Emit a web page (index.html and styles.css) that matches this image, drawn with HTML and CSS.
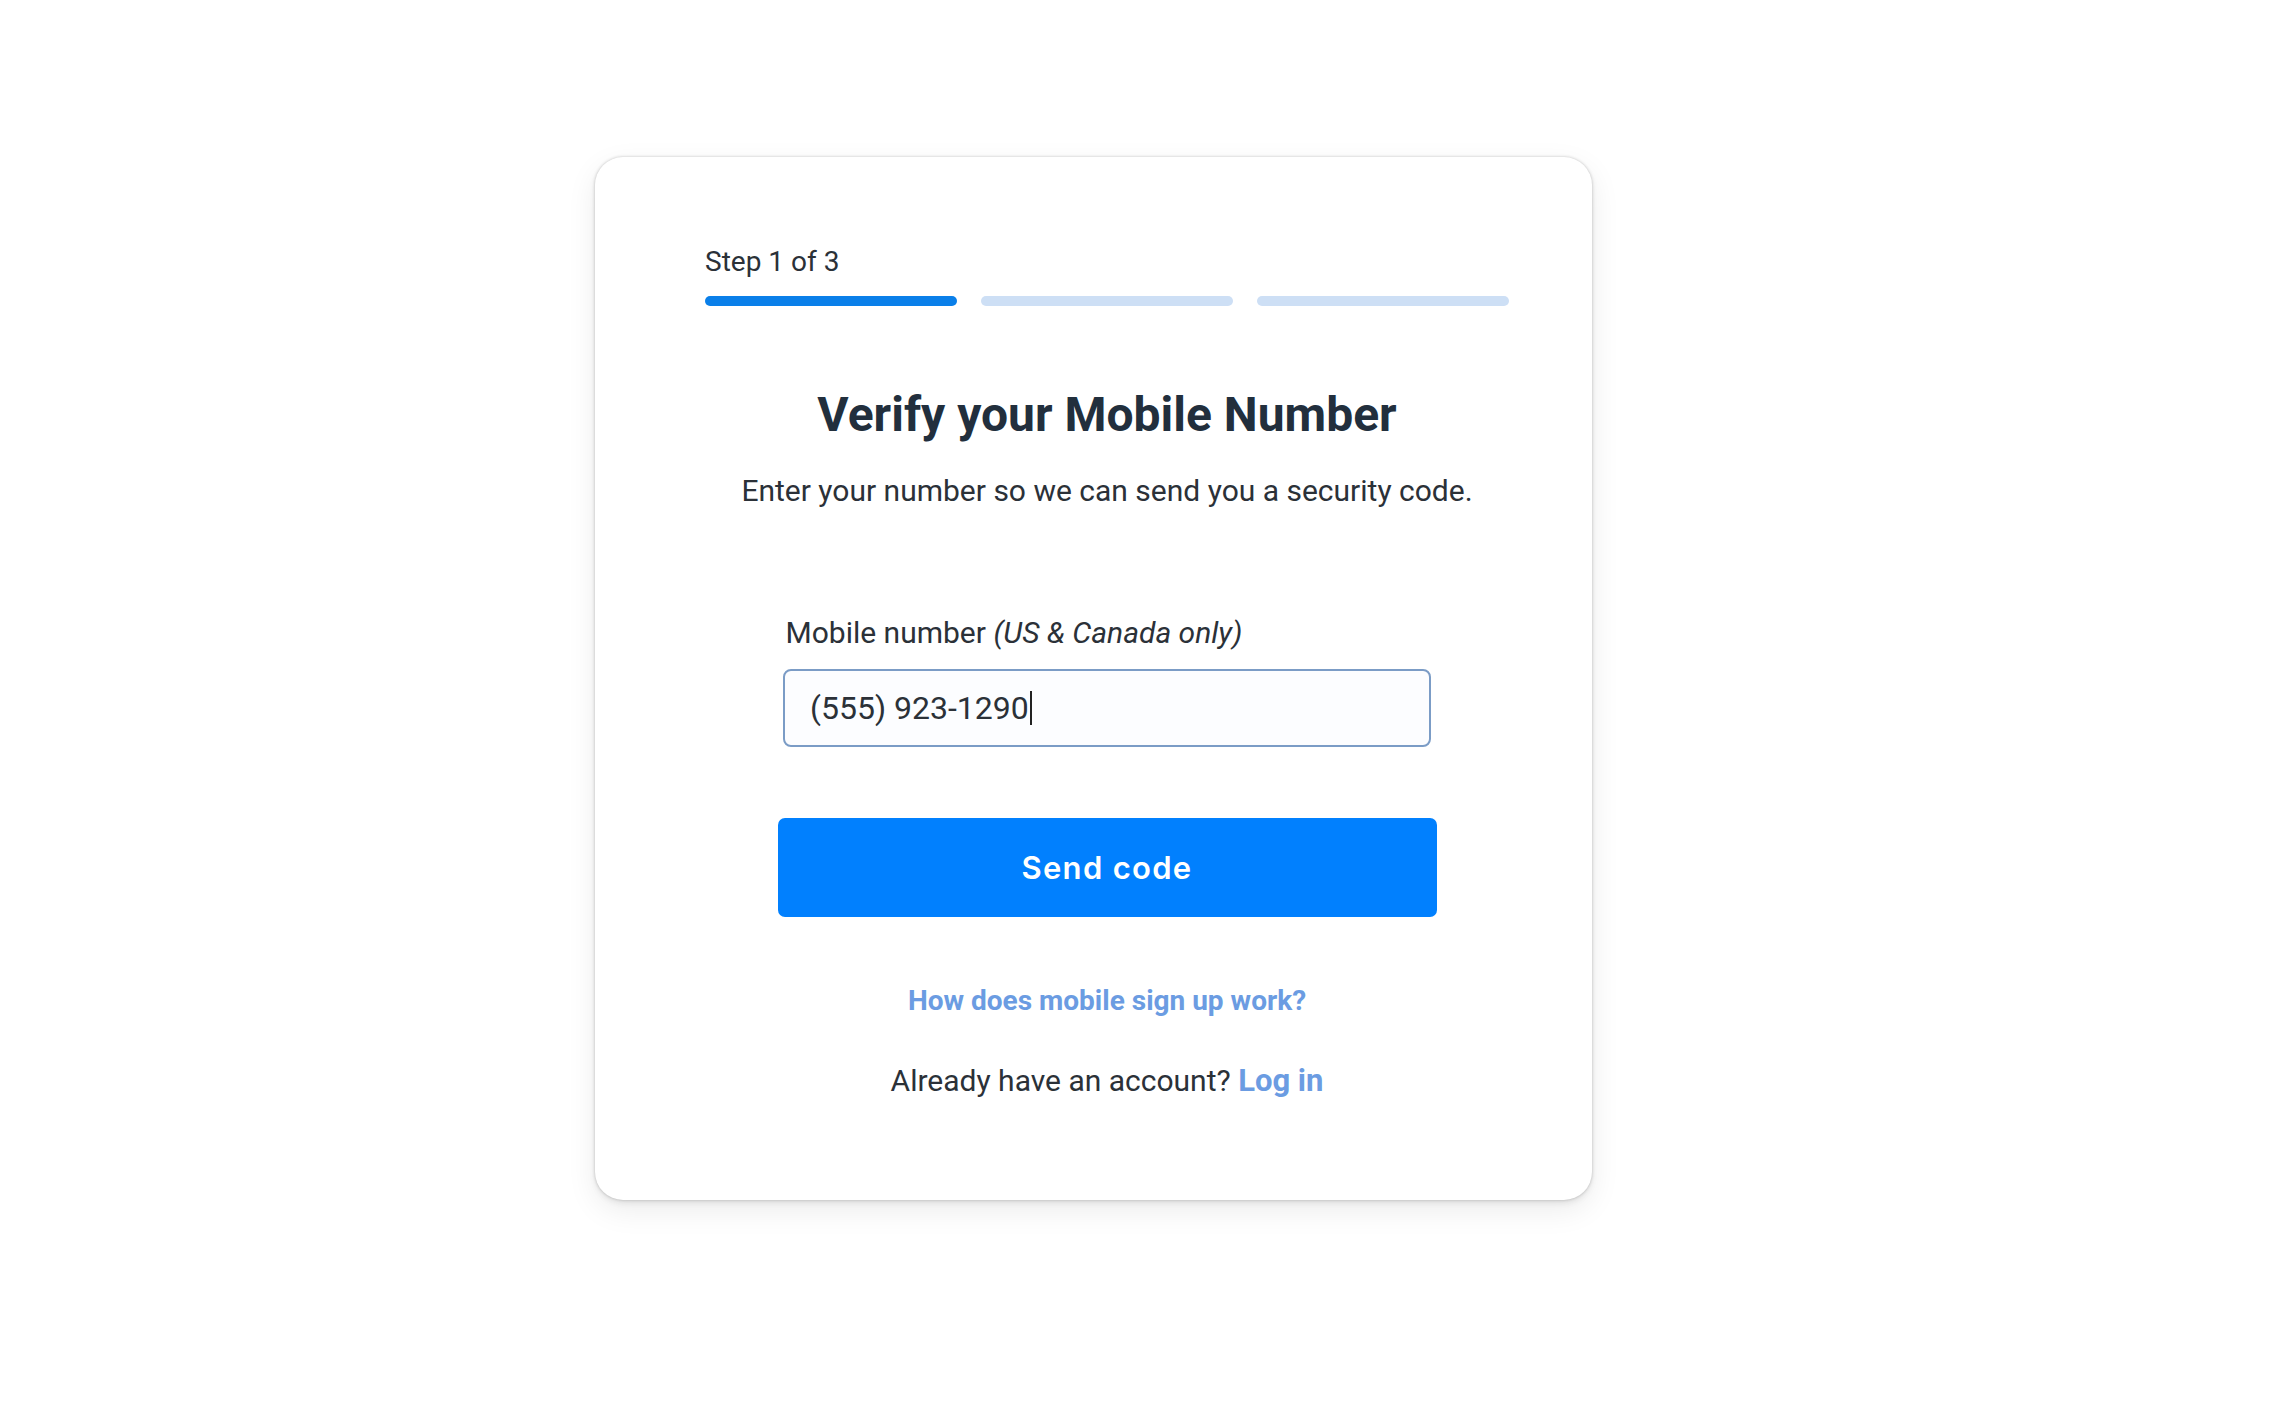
FILE: index.html
```html
<!DOCTYPE html>
<html lang="en">
<head>
<meta charset="utf-8">
<title>Verify your Mobile Number</title>
<link rel="stylesheet" href="styles.css">
</head>
<body>
<div class="page">
  <main class="card">
    <div class="stepper">
      <div class="step-label">Step 1 of 3</div>
      <div class="bars">
        <span class="bar active"></span>
        <span class="bar"></span>
        <span class="bar"></span>
      </div>
    </div>
    <h1 class="title">Verify your Mobile Number</h1>
    <p class="subtitle">Enter your number so we can send you a security code.</p>
    <form class="form">
      <label class="label">Mobile number <em>(US &amp; Canada only)</em></label>
      <div class="input"><span class="value">(555) 923-1290</span><span class="caret"></span></div>
      <button type="button" class="btn">Send code</button>
    </form>
    <a class="help" href="#">How does mobile sign up work?</a>
    <p class="login">Already have an account? <a href="#">Log in</a></p>
  </main>
</div>
</body>
</html>
```
FILE: styles.css
```css
* { box-sizing: border-box; }
html, body { margin: 0; background: #ffffff; }
body { font-family: Roboto, "Liberation Sans", sans-serif; color: #2b3138; }

.page {
  min-height: 1424px;
  padding: 157px 0 120px 595px;
}

.card {
  width: 997px;
  height: 1043px;
  background: #fff;
  border-radius: 28px;
  box-shadow: 0 0 3px rgba(0,0,0,0.22), 0 3px 6px rgba(0,0,0,0.08), 0 10px 30px rgba(0,0,0,0.08);
  padding: 90px 83px 0 110px;
  display: flex;
  flex-direction: column;
  align-items: center;
}

.stepper { width: 100%; }
.step-label {
  font-size: 28px;
  line-height: 30px;
  color: #2b3138;
}
.bars {
  display: flex;
  gap: 24px;
  margin-top: 19px;
}
.bar {
  flex: 1;
  height: 10px;
  border-radius: 5px;
  background: #cddff5;
}
.bar.active { background: #0a7fe9; }

.title {
  margin: 81px 0 0;
  font-size: 48px;
  line-height: 56px;
  font-weight: 700;
  color: #222f3d;
  text-align: center;
}
.subtitle {
  margin: 31px 0 0;
  font-size: 30px;
  line-height: 34px;
  color: #2b3138;
  text-align: center;
}

.form {
  margin-top: 108px;
  width: 659px;
  display: flex;
  flex-direction: column;
  align-items: center;
}
.label {
  align-self: stretch;
  padding-left: 8px;
  font-size: 30px;
  line-height: 34px;
  color: #2b3138;
}
.label em { font-style: italic; }

.input {
  margin-top: 19px;
  width: 648px;
  height: 78px;
  border: 2px solid #7b9cc6;
  border-radius: 8px;
  background: #fcfdff;
  display: flex;
  align-items: center;
  padding-left: 25px;
  font-size: 32px;
  color: #2b3138;
}
.caret {
  display: inline-block;
  width: 2px;
  height: 34px;
  background: #222;
  margin-left: 1px;
}

.btn {
  margin-top: 71px;
  width: 659px;
  height: 99px;
  border: 0;
  border-radius: 7px;
  background: #0180fe;
  color: #fff;
  font-family: Inter, "Open Sans", sans-serif;
  font-weight: 600;
  font-size: 31px;
  letter-spacing: 1.3px;
}

.help {
  margin-top: 67px;
  font-size: 28px;
  line-height: 34px;
  font-weight: 700;
  color: #6b9ce2;
  text-decoration: none;
}
.login {
  margin: 46px 0 0;
  font-size: 30px;
  line-height: 34px;
  color: #2b3138;
}
.login a {
  font-weight: 700;
  font-size: 31px;
  color: #6b9ce2;
  text-decoration: none;
}
```
